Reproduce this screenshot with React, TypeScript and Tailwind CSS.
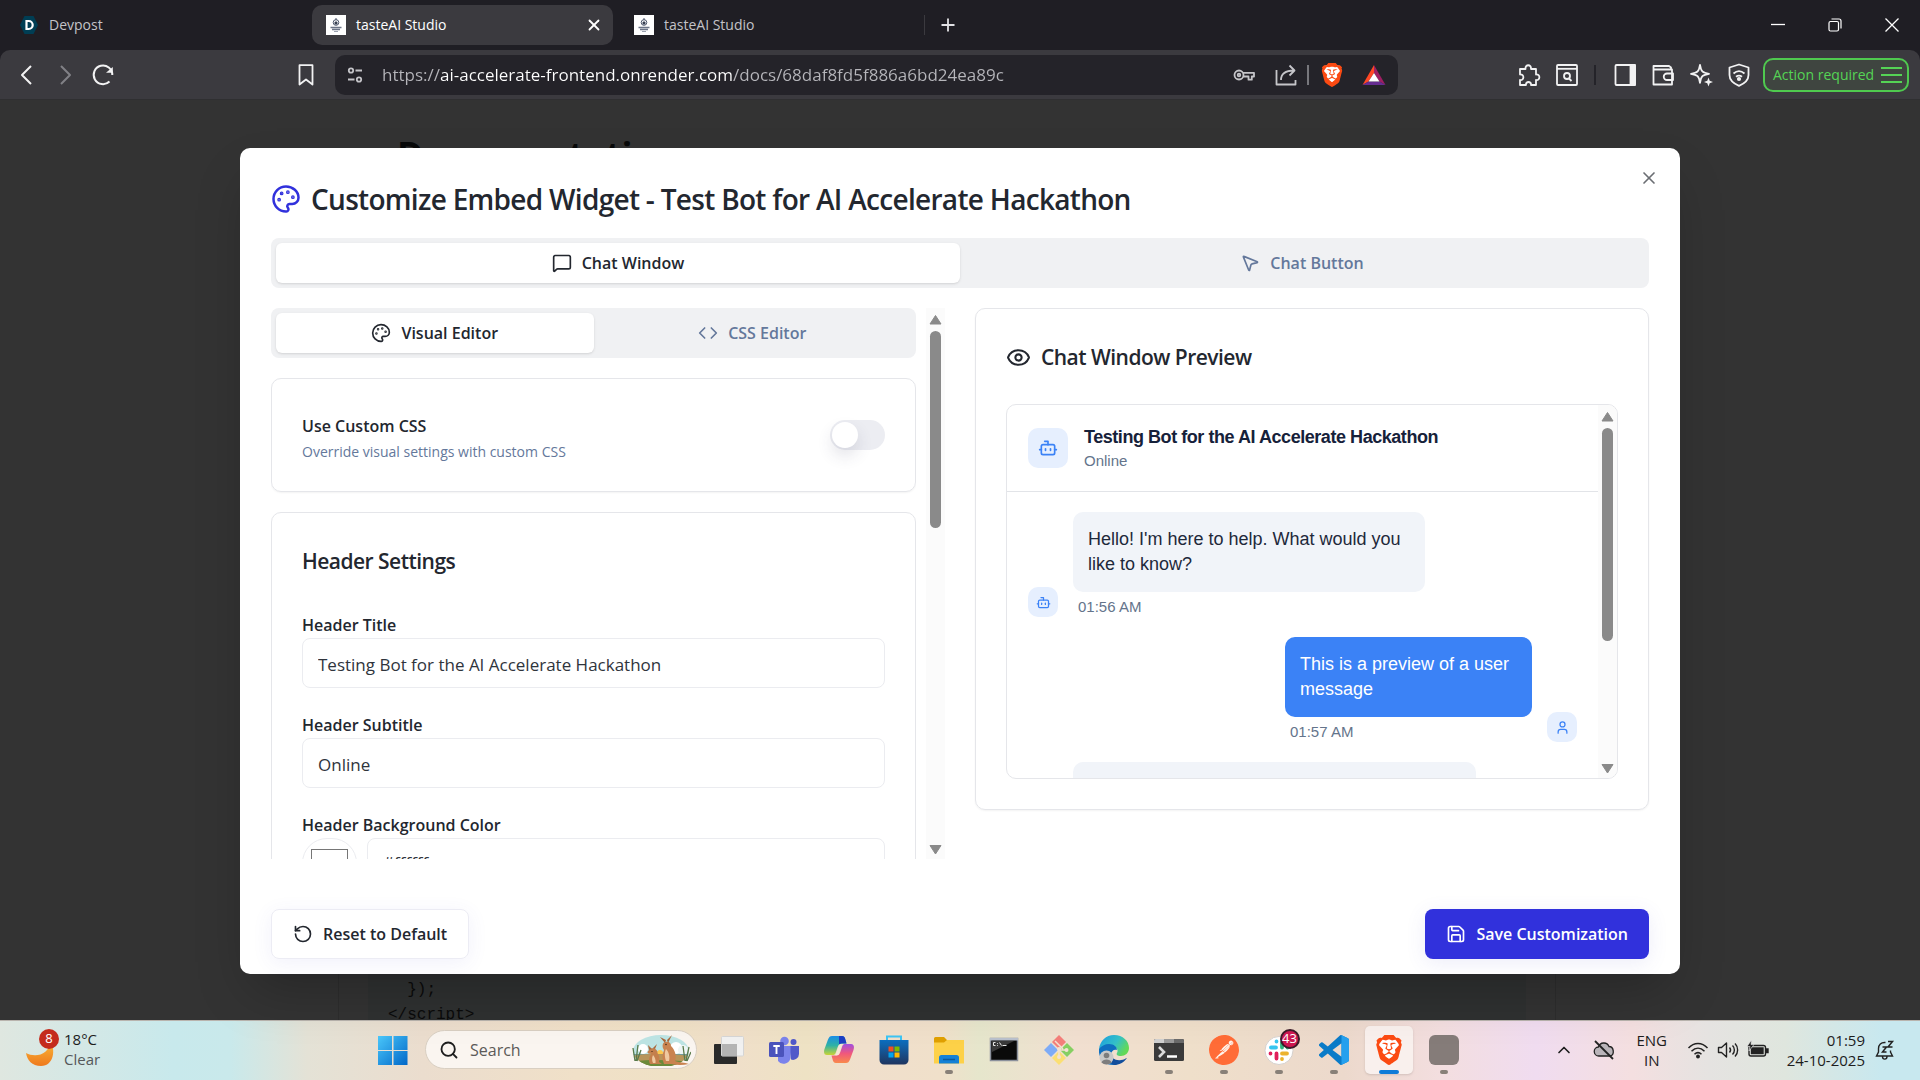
import { useState, type ReactNode } from "react";
import {
  Bot,
  ChevronUp,
  Code,
  Eye,
  MessageSquare,
  MousePointer2,
  Palette,
  RotateCcw,
  Save,
  Search,
  User,
  X,
} from "lucide-react";
import { SiBrave, SiPostman } from "react-icons/si";

const BRAVE_SHIELD = "M12 1 L20 3 L21.5 7 L19 17 L12 23 L5 17 L2.5 7 L4 3 Z";

function BraveLogo({ className }: { className: string }) {
  return (
    <span className={`relative block ${className}`}>
      <svg viewBox="0 0 24 24" className="absolute inset-0 size-full">
        <path d={BRAVE_SHIELD} fill="#fff" />
      </svg>
      <SiBrave className="absolute inset-0 size-full text-[#fb4a12]" />
    </span>
  );
}

function SiteIcon() {
  return (
    <svg viewBox="0 0 20 20" className="size-5 shrink-0">
      <rect width="20" height="20" fill="#fff" />
      <circle cx="10" cy="7.5" r="2.8" fill="none" stroke="#4b556b" />
      <path d="M10 3v2M9 7h2v2H9z" stroke="#4b556b" />
      <path d="M4.5 12.500h11M6 14.500h8" stroke="#6b7487" strokeWidth="1.400" />
      <path d="M8 16.500h4" stroke="#9aa1af" />
    </svg>
  );
}

function BrowserTabs() {
  return (
    <div className="flex h-[50px] shrink-0 items-center bg-[#1f1e24] text-sm text-[#c3c3c8]">
      <button type="button" className="ml-[19px] flex w-[293px] items-center gap-2.5">
        <svg viewBox="0 0 20 20" className="size-5">
          <path d="M5.500 1h9L19 10l-4.500 9h-9L1 10z" fill="#003e54" />
          <path
            d="M7.500 6h2.200a4 4 0 0 1 0 8H7.500z"
            fill="none"
            stroke="#fff"
            strokeWidth="2.200"
          />
        </svg>
        Devpost
      </button>
      <div className="flex h-10 w-[301px] items-center rounded-[10px] bg-[#3b3a3f] pr-2.5 pl-3.5 text-white">
        <button type="button" className="flex flex-1 items-center gap-2.5">
          <SiteIcon />
          tasteAI Studio
        </button>
        <button type="button" aria-label="Close tab">
          <X className="size-[18px]" strokeWidth={2.4} />
        </button>
      </div>
      <button type="button" className="ml-[21px] flex w-[290px] items-center gap-2.5">
        <SiteIcon />
        tasteAI Studio
      </button>
      <div className="h-5 w-px bg-[#3b3a3f]" />
      <button type="button" aria-label="New tab" className="ml-[15px]">
        <svg viewBox="0 0 16 16" className="size-4" stroke="#e2e2e5" strokeWidth="1.800">
          <path d="M8 1.500v13M1.500 8h13" />
        </svg>
      </button>
      <div className="ml-auto flex">
        <button type="button" aria-label="Minimize" className="flex w-[57px] justify-center">
          <svg viewBox="0 0 14 14" className="size-3.5" stroke="#fff" strokeWidth="1.300">
            <path d="M0 6.500h14" />
          </svg>
        </button>
        <button type="button" aria-label="Restore" className="flex w-[57px] justify-center">
          <svg viewBox="0 0 14 14" className="size-3.5" stroke="#fff" strokeWidth="1.200" fill="none">
            <rect x="1" y="3.500" width="9.500" height="9.500" rx="1.500" />
            <path d="M3.500 1H11a2 2 0 0 1 2 2v7.500" />
          </svg>
        </button>
        <button type="button" aria-label="Close window" className="flex w-[57px] justify-center">
          <svg viewBox="0 0 14 14" className="size-3.5" stroke="#fff" strokeWidth="1.300">
            <path d="M.5.5l13 13M13.500.5l-13 13" />
          </svg>
        </button>
      </div>
    </div>
  );
}

function ToolIcon({
  label,
  children,
  className = "w-[38px]",
}: {
  label: string;
  children: ReactNode;
  className?: string;
}) {
  return (
    <button type="button" aria-label={label} className={`flex shrink-0 justify-center ${className}`}>
      <svg
        viewBox="0 0 24 24"
        className="size-6"
        fill="none"
        stroke="currentColor"
        strokeWidth="1.800"
        strokeLinejoin="round"
      >
        {children}
      </svg>
    </button>
  );
}

function Toolbar() {
  return (
    <div className="flex h-[50px] shrink-0 items-center rounded-t-[10px] border-b border-[#2f2f31] bg-[#3b3a3f] text-[#f2f2f3]">
      <div className="flex w-[335px] shrink-0 items-center pl-2">
        <ToolIcon label="Back">
          <path d="M16 3l-9 9 9 9" strokeWidth="2" />
        </ToolIcon>
        <ToolIcon label="Forward">
          <path d="M8 3l9 9-9 9" stroke="#818186" strokeWidth="2" />
        </ToolIcon>
        <ToolIcon label="Reload">
          <path d="M18.500 18.500a9.300 9.300 0 1 1 2.800-6.500" strokeWidth="2" />
          <path d="M15 9.800h6.800V4z" fill="currentColor" stroke="none" />
        </ToolIcon>
        <ToolIcon label="Bookmark" className="ml-auto w-[58px]">
          <path d="M5.500 2.200h13v19.300L12 16.500l-6.500 5z" />
        </ToolIcon>
      </div>
      <div className="flex h-10 min-w-0 flex-1 items-center rounded-[10px] bg-[#242329]">
        <ToolIcon label="Site information" className="w-10 text-[#c5c5c9]">
          <circle cx="8" cy="7.500" r="2.200" />
          <path d="M12.500 7.500H19M5 16.500h6.500" />
          <circle cx="16" cy="16.500" r="2.200" />
        </ToolIcon>
        {/* scheme and path are dimmer than the host name */}
        <input
          type="text"
          aria-label="Address"
          defaultValue="https://ai-accelerate-frontend.onrender.com/docs/68daf8fd5f886a6bd24ea89c"
          className="ml-[7px] h-10 min-w-0 flex-1 bg-[linear-gradient(90deg,#b6b6bb_58px,#fff_58px,#fff_351px,#b6b6bb_351px)] bg-clip-text text-[17px] text-transparent outline-none"
        />
        <ToolIcon label="Passwords" className="w-[42px] text-[#c5c5c9]">
          <circle cx="7" cy="12" r="4.500" />
          <circle cx="7" cy="12" r="1.300" />
          <path d="M11 9.800h11v3.700h-2.200v3.200h-3.300v-3.200H11.300" />
        </ToolIcon>
        <ToolIcon label="Share" className="w-[42px] text-[#c5c5c9]">
          <path d="M2.500 7v14.500h19V17" />
          <path d="M7 17c0-6 4-9.500 13-9.500M15.500 2.500l5 5-5 5" />
        </ToolIcon>
        <div className="h-5 w-0.5 bg-[#77777c]" />
        <button type="button" aria-label="Brave Shields" className="flex w-[46px] justify-center">
          <BraveLogo className="size-6" />
        </button>
        <button type="button" aria-label="Brave Rewards" className="mr-3 ml-[7px]">
          <svg viewBox="0 0 24 22" className="h-[22px] w-6">
            <path d="M12 1L12 9 6.500 17.500.5 21z" fill="#ff4724" />
            <path d="M12 1L23.500 21l-6-3.500L12 9z" fill="#9e1f63" />
            <path d="M.5 21l6-3.500h11l6 3.500z" fill="#662d91" />
            <path d="M12 9l5.500 8.500h-11z" fill="#fff" />
          </svg>
        </button>
      </div>
      <div className="flex shrink-0 items-center pr-[11px] pl-28">
        <ToolIcon label="Extensions">
          <path d="M3 6h5.500C8 1 14.500 1 14 6h5v5.500c4.500-.5 4.500 6 0 5.500v5h-5c.5-4-5.500-4-5 0H3v-5c4.500.5 4.500-6 0-5.500z" />
        </ToolIcon>
        <ToolIcon label="Search tabs">
          <rect x="2" y="2" width="20" height="20" rx="1" />
          <path d="M2 5.800h20" />
          <circle cx="12" cy="13" r="3" />
          <path d="M14 15.500l2.500 2.500" />
        </ToolIcon>
        <div className="mr-2.5 ml-2 h-5 w-0.5 bg-[#242329]" />
        <ToolIcon label="Sidebar">
          <rect x="2.500" y="2" width="19.500" height="20" rx="1" />
          <path d="M17.500 2H22v20h-4.500z" fill="currentColor" />
        </ToolIcon>
        <ToolIcon label="Wallet">
          <path d="M20 6.500V4.500L18 3H2.500v18.500H21V6.500H2.500M22 10.500h-6a3 3 0 0 0 0 6.500h6z" />
        </ToolIcon>
        <ToolIcon label="Leo">
          <path d="M11 1.800c1 6.500 2.500 8 9 9-6.500 1-8 2.500-9 9-1-6.500-2.500-8-9-9 6.500-1 8-2.500 9-9z" />
          <path d="M19.500 14.500l1.200 3.200 3.300 1.300-3.300 1.200-1.200 3.300-1.200-3.300-3.300-1.200 3.300-1.300z" fill="currentColor" stroke="none" />
        </ToolIcon>
        <ToolIcon label="VPN">
          <path d="M12 1.500l9.500 3V12c0 5-4 8.500-9.500 10.800C6.500 20.500 2.500 17 2.500 12V4.500z" />
          <path d="M6.500 10.500c3.500-3 7.500-3 11 0M9 13.700c2-1.500 4-1.500 6 0" />
          <circle cx="12" cy="16" r="1.200" fill="currentColor" />
        </ToolIcon>
        <button
          type="button"
          className="ml-[5px] flex h-[34px] w-[146px] items-center justify-between rounded-[10px] border-2 border-[#4fc94f] bg-[#3f4540] pr-[5px] pl-2 text-sm whitespace-nowrap text-[#55d455]"
        >
          Action required
          <svg viewBox="0 0 21 18" className="h-[18px] w-[21px]" stroke="currentColor" strokeWidth="2">
            <path d="M0 2h21M0 9h21M0 16h21" />
          </svg>
        </button>
      </div>
    </div>
  );
}

function DocsPage() {
  return (
    <div className="flex h-full flex-col justify-between overflow-hidden bg-[#333]">
      <h1 className="pt-[30px] pl-[397px] text-[36px] leading-[50px] font-bold text-[#080909]">
        Documentation
      </h1>
      <div className="mr-[364px] -mb-2 ml-[338px] h-40 border-x border-[#2d2d2d] pr-[29px] pl-[29px]">
        <pre className="flex h-full flex-col justify-end bg-[#2f3131] pl-5 font-['Liberation_Mono',monospace] text-base leading-[25px] text-[#0a0a0a]">
          {"  });\n</script>"}
        </pre>
      </div>
    </div>
  );
}

function Scrollbar({ thumb }: { thumb: string }) {
  return (
    <div className="flex w-[19px] shrink-0 flex-col items-center bg-[#fbfbfb]">
      <svg viewBox="0 0 19 23" className="h-[23px] w-[19px] shrink-0">
        <path d="M9.500 7.500L15 16H4z" fill="#8a8a8a" stroke="#8a8a8a" strokeLinejoin="round" />
      </svg>
      <div className="min-h-0 w-full flex-1">
        <div className={`mx-auto w-[11px] rounded-full bg-[#8a8a8a] ${thumb}`} />
      </div>
      <svg viewBox="0 0 19 23" className="h-[23px] w-[19px] shrink-0">
        <path d="M9.500 18L15 9.500H4z" fill="#8a8a8a" stroke="#8a8a8a" strokeLinejoin="round" />
      </svg>
    </div>
  );
}

function TabButton({
  active,
  onClick,
  children,
}: {
  active: boolean;
  onClick: () => void;
  children: ReactNode;
}) {
  return (
    <button
      type="button"
      role="tab"
      aria-selected={active}
      onClick={onClick}
      className={`flex h-10 flex-1 items-center justify-center gap-2.5 rounded-[6px] text-base font-semibold ${
        active ? "bg-white text-[#23272f] shadow-sm" : "text-[#64789b]"
      }`}
    >
      {children}
    </button>
  );
}

function Field({ id, label, defaultValue }: { id: string; label: string; defaultValue: string }) {
  return (
    <div>
      <label htmlFor={id} className="block text-base leading-[25px] font-semibold">
        {label}
      </label>
      <input
        id={id}
        type="text"
        defaultValue={defaultValue}
        className="h-[50px] w-full rounded-[8px] border border-[#ebecf0] px-[15px] pt-0.5 text-[#2f343c]"
      />
    </div>
  );
}

function EditorPanel() {
  const [mode, setMode] = useState("visual");
  const [customCss, setCustomCss] = useState(false);
  const [color, setColor] = useState("#ffffff");

  return (
    <div className="flex min-h-0 gap-2.5">
      <div className="flex min-w-0 flex-1 flex-col gap-5 overflow-hidden">
        <div role="tablist" className="flex shrink-0 rounded-[8px] bg-[#f0f1f3] p-[5px]">
          <TabButton active={mode === "visual"} onClick={() => setMode("visual")}>
            <Palette className="size-5" />
            Visual Editor
          </TabButton>
          <TabButton active={mode === "css"} onClick={() => setMode("css")}>
            <Code className="size-5" />
            CSS Editor
          </TabButton>
        </div>

        <section className="flex h-[114px] shrink-0 items-center justify-between rounded-[10px] border border-[#e5e6ea] px-[30px] shadow-xs">
          <div className="pt-2">
            <label htmlFor="custom-css" className="block text-base leading-[26px] font-semibold">
              Use Custom CSS
            </label>
            <p className="text-sm leading-[26px] text-[#64789b]">
              Override visual settings with custom CSS
            </p>
          </div>
          <label className="relative block h-[30px] w-[55px]">
            <input
              id="custom-css"
              type="checkbox"
              role="switch"
              checked={customCss}
              onChange={(e) => setCustomCss(e.target.checked)}
              className="peer block h-[30px] w-[55px] appearance-none rounded-full bg-[#ecedf2] checked:bg-[#3131dc]"
            />
            <span className="pointer-events-none absolute top-[2px] left-[2px] size-[26px] rounded-full bg-white shadow-[0_8px_16px_rgba(60,60,90,0.14)] peer-checked:left-[27px]" />
          </label>
        </section>

        <section className="shrink-0 rounded-[10px] border border-[#e5e6ea] p-[30px] shadow-xs">
          <h3 className="pt-[3px] text-[21px] leading-[30px] font-semibold tracking-tight">
            Header Settings
          </h3>
          <div className="flex flex-col gap-[25px] pt-[37px]">
            <Field
              id="header-title"
              label="Header Title"
              defaultValue="Testing Bot for the AI Accelerate Hackathon"
            />
            <Field id="header-subtitle" label="Header Subtitle" defaultValue="Online" />
            <div>
              <label htmlFor="header-bg" className="block text-base leading-[25px] font-semibold">
                Header Background Color
              </label>
              <div className="flex gap-2.5">
                <div className="rounded-full border border-[#ebecf0] px-2 py-2.5">
                  <input
                    type="color"
                    aria-label="Pick header background color"
                    value={color}
                    onChange={(e) => setColor(e.target.value)}
                    className="block h-7 w-[37px] appearance-none border border-[#767676] bg-white [&::-webkit-color-swatch]:border-0 [&::-webkit-color-swatch-wrapper]:p-0"
                  />
                </div>
                <input
                  id="header-bg"
                  type="text"
                  value={color}
                  onChange={(e) => setColor(e.target.value)}
                  className="h-[50px] min-w-0 flex-1 rounded-[8px] border border-[#ebecf0] px-[15px] pb-0.5 text-[#2f343c]"
                />
              </div>
            </div>
          </div>
        </section>
      </div>
      <Scrollbar thumb="h-[39%]" />
    </div>
  );
}

function ChatPreview() {
  return (
    <section className="self-start rounded-[10px] border border-[#e5e6ea] p-[30px] shadow-xs">
      <h3 className="flex items-center gap-2.5 pt-[3px] text-[21px] leading-[30px] font-semibold tracking-tight">
        <Eye className="size-[25px]" />
        Chat Window Preview
      </h3>
      <div className="mt-8 flex h-[375px] overflow-hidden rounded-[10px] border border-[#e5e6ea] font-['Liberation_Sans',Arial,sans-serif] text-[#1e293b]">
        <div className="min-w-0 flex-1 overflow-hidden">
          <header className="flex items-center gap-4 border-b border-[#e2e4e8] px-[21px] py-[19px]">
            <span className="flex size-10 items-center justify-center rounded-[10px] bg-[#e6effe] text-[#3b82f6]">
              <Bot className="size-5" />
            </span>
            <div>
              <h4 className="text-lg leading-[26px] font-bold tracking-tight text-[#16213a]">
                Testing Bot for the AI Accelerate Hackathon
              </h4>
              <p className="text-[15px] leading-[22px] text-[#64748b]">Online</p>
            </div>
          </header>
          <div className="flex flex-col gap-5 px-[21px] py-5">
            <div className="flex items-end gap-[15px]">
              <span className="flex size-[30px] items-center justify-center rounded-[10px] bg-[#e6effe] text-[#3b82f6]">
                <Bot className="size-[15px]" />
              </span>
              <div className="max-w-[352px]">
                <p className="rounded-[10px] bg-[#f1f4f9] p-[15px] text-lg leading-[25px]">
                  Hello! I'm here to help. What would you like to know?
                </p>
                <p className="px-[5px] pt-[5px] text-[15px] leading-5 text-[#64748b]">01:56 AM</p>
              </div>
            </div>
            <div className="flex items-end justify-end gap-[15px]">
              <div className="max-w-[247px]">
                <p className="rounded-[10px] bg-[#3b82f6] p-[15px] text-lg leading-[25px] text-white">
                  This is a preview of a user message
                </p>
                <p className="px-[5px] pt-[5px] text-[15px] leading-5 text-[#64748b]">01:57 AM</p>
              </div>
              <span className="flex size-[30px] items-center justify-center rounded-[10px] bg-[#e6effe] text-[#3b82f6]">
                <User className="size-[15px]" />
              </span>
            </div>
            <div className="ml-[45px] h-20 max-w-[403px] rounded-[10px] bg-[#f1f4f9]" />
          </div>
        </div>
        <Scrollbar thumb="h-[65%]" />
      </div>
    </section>
  );
}

function CustomizeDialog() {
  const [tab, setTab] = useState("window");

  return (
    <div
      role="dialog"
      aria-labelledby="dialog-title"
      className="relative flex h-full w-3/4 flex-col rounded-[10px] bg-white px-[31px] pt-[31px] pb-[15px] text-[17px] text-[#23272f] shadow-2xl"
    >
      <button type="button" aria-label="Close" className="absolute top-5 right-[21px] text-[#6b6e73]">
        <X className="size-5" />
      </button>
      <h2
        id="dialog-title"
        className="flex items-center gap-2.5 text-[28px] leading-10 font-semibold tracking-tight"
      >
        <Palette className="size-[30px] text-[#3131dc]" />
        Customize Embed Widget - Test Bot for AI Accelerate Hackathon
      </h2>
      <div role="tablist" className="mt-[19px] flex shrink-0 rounded-[8px] bg-[#f0f1f3] p-[5px]">
        <TabButton active={tab === "window"} onClick={() => setTab("window")}>
          <MessageSquare className="size-5" />
          Chat Window
        </TabButton>
        <TabButton active={tab === "button"} onClick={() => setTab("button")}>
          <MousePointer2 className="size-5" />
          Chat Button
        </TabButton>
      </div>
      <div className="mt-5 grid min-h-0 flex-1 grid-cols-2 gap-[30px]">
        <EditorPanel />
        <ChatPreview />
      </div>
      <footer className="mt-[50px] flex justify-between text-base font-semibold">
        <button
          type="button"
          className="flex h-[50px] items-center gap-2.5 rounded-[8px] border border-[#ececf4] px-[21px] shadow-[0_4px_20px_rgba(80,80,200,0.08)]"
        >
          <RotateCcw className="size-5" />
          Reset to Default
        </button>
        <button
          type="button"
          className="flex h-[50px] items-center gap-2.5 rounded-[8px] bg-[#3131dc] px-[21px] text-white shadow-[0_4px_20px_rgba(80,80,200,0.1)]"
        >
          <Save className="size-5" />
          Save Customization
        </button>
      </footer>
    </div>
  );
}

function TaskApp({
  label,
  open,
  active,
  children,
}: {
  label: string;
  open?: boolean;
  active?: boolean;
  children: ReactNode;
}) {
  return (
    <button type="button" aria-label={label} className="flex w-[55px] shrink-0 justify-center">
      <span
        className={`flex size-12 flex-col items-center rounded-[5px] pt-[9px] ${
          active ? "bg-[#f9f0ed] shadow-sm" : ""
        }`}
      >
        {children}
        {open && (
          <span className={`mt-[5px] h-1 shrink-0 rounded-full ${active ? "w-5 bg-[#0f7bd8]" : "w-2 bg-[#888078]"}`} />
        )}
      </span>
    </button>
  );
}

function Kangaroos() {
  return (
    <svg viewBox="0 0 60 32" className="h-8 w-[60px]">
      <defs>
        <clipPath id="scene">
          <ellipse cx="30" cy="17" rx="28" ry="16" />
        </clipPath>
      </defs>
      <g clipPath="url(#scene)">
        <rect width="60" height="32" fill="#bde4e4" />
        <circle cx="12" cy="15" r="5" fill="#fff" />
        <circle cx="45" cy="14" r="6" fill="#fff" />
        <circle cx="52" cy="16" r="5" fill="#eef6f5" />
        <circle cx="29" cy="19" r="3" fill="#ffc94d" />
        <path d="M0 20h60v4H0z" fill="#6f9a9c" />
        <path d="M0 22c20-3 40-2 60 0v10H0z" fill="#b8955a" />
        <path d="M0 28c20-3 40-2 60 0v4H0z" fill="#6a8a3a" />
      </g>
      <path d="M4 27L2 14M5 27l2-16M6 27l4-11M55 27l3-14M54 27l-2-15M56 27l4-9" stroke="#587a4a" strokeWidth="1.300" />
      <path d="M23 14c2 1 4 3 3.500 5 2 3 2.500 6 1.500 9l3 2h-12c-2-4-.5-8 1.500-10-3 0-4-1-4-2 1-2 4-4 6.500-4z" fill="#c47f4c" />
      <path d="M21 15l-4-4 1 5zM24 15l2-5-4 4z" fill="#a9673b" />
      <path d="M34 8c4-1 6 1 6 4 4 4 6 10 4 15 5 2 9 1 14 3-7 1.500-13 1-18 0h-7c-2-5-2-9 0-14-2-3-2-7 1-8z" fill="#c98350" />
      <path d="M34 9l-5-6 6 3zM37 9l4-8-5 5z" fill="#a9673b" />
      <path d="M35 15c-2 4-1 9 0 12h3c1-4 0-9-3-12zM22 21c-1.500 3-1 6 0 8h2.500c.5-3-.5-6-2.500-8z" fill="#efc9a0" />
      <circle cx="35" cy="10.500" r=".7" fill="#2c1b10" />
      <circle cx="21" cy="17.500" r=".6" fill="#2c1b10" />
    </svg>
  );
}

function Taskbar() {
  return (
    <footer className="flex h-[60px] shrink-0 items-center border-t border-[#b9b4ae] bg-[linear-gradient(90deg,#dfe7e0_0%,#c8e9ec_9%,#c9e9eb_12%,#e4e2d6_16%,#ebddce_22%,#f0e0c8_30%,#efe1c5_35%,#f0dfca_38%,#eee2c4_42%,#f0dfcc_45%,#f0e0ca_49%,#e6e6cc_51%,#f1dfd0_56%,#efdfca_62%,#ecd9cc_70%,#f3dedf_75%,#f0dcf0_80%,#f4dfe0_85%,#e5e3e1_89%,#dfe6de_93%,#c8e8ef_98%)] pb-0.5 text-[15px] text-[#1d1d1d]">
      <div className="flex w-[365px] shrink-0 items-center">
        <div className="relative ml-[26px] h-9 w-[38px]">
          <svg viewBox="0 0 38 36" className="size-full">
            <defs>
              <linearGradient id="moon" x1="0" y1="0" x2="0" y2="1">
                <stop offset="0" stopColor="#f9b93a" />
                <stop offset="1" stopColor="#ef7a1d" />
              </linearGradient>
            </defs>
            <path d="M24 9c6 8 4 25-9 25C6 34 1 28 0 21c9 5 24 2 24-12z" fill="url(#moon)" />
          </svg>
          <span className="absolute -top-[3px] left-[13px] flex size-5 items-center justify-center rounded-full bg-[#c42b1c] text-[13px] text-white">
            8
          </span>
        </div>
        <div className="pb-0.5 leading-5">
          <p>18°C</p>
          <p className="text-[#55585a]">Clear</p>
        </div>
      </div>
      <TaskApp label="Start">
        <svg viewBox="0 0 30 30" className="size-[30px]">
          <defs>
            <linearGradient id="win" x1="0" y1="0" x2="1" y2="1">
              <stop offset="0" stopColor="#4bc8fb" />
              <stop offset="1" stopColor="#0067c8" />
            </linearGradient>
          </defs>
          <path d="M0 1h14v14H0zM15.500 1h14v14h-14zM0 16h14v14H0zM15.500 16h14v14h-14z" fill="url(#win)" />
        </svg>
      </TaskApp>
      <div className="mr-1 ml-[5px] flex h-[39px] w-[272px] shrink-0 items-center rounded-full border border-[#d9cfc2] bg-[#faf5f0] pr-[5px] pl-[13px]">
        <Search className="size-5 shrink-0 text-[#1d1d1d]" strokeWidth={2.2} />
        <input
          type="text"
          aria-label="Search"
          placeholder="Search"
          className="ml-[11px] w-0 min-w-0 flex-1 text-base placeholder:text-[#5c5a58]"
        />
        <Kangaroos />
      </div>
      <TaskApp label="Task view">
        <svg viewBox="0 0 30 30" className="size-[30px]">
          <rect x="0" y="9" width="23" height="20" rx="1" fill="#2a2a2a" />
          <rect x="7.500" y="1.500" width="22" height="19.500" rx="1" fill="#f1f1f1" stroke="#d5d5d5" />
          <path d="M8 9h15v12H8z" fill="#b4b4b4" />
        </svg>
      </TaskApp>
      <TaskApp label="Teams">
        <svg viewBox="0 0 30 30" className="size-[30px]">
          <circle cx="24.500" cy="7" r="3" fill="#5059c9" />
          <circle cx="15.500" cy="6" r="4.300" fill="#7b83eb" />
          <path d="M20 11h10v8a6 6 0 0 1-8 5.500z" fill="#5059c9" />
          <path d="M9 11h12.500v10a7 7 0 0 1-12.500 5z" fill="#7b83eb" />
          <rect x="0" y="7" width="15" height="15" rx="1.500" fill="#4b53bc" />
          <path d="M4.300 11h6.500M7.500 11v8" stroke="#fff" strokeWidth="1.900" />
        </svg>
      </TaskApp>
      <TaskApp label="Copilot">
        <svg viewBox="0 0 30 30" className="size-[30px]">
          <defs>
            <linearGradient id="cop1" x1="0" y1="0" x2="0" y2="1">
              <stop offset="0" stopColor="#1b8fe8" />
              <stop offset=".5" stopColor="#2fb2a5" />
              <stop offset="1" stopColor="#c9d434" />
            </linearGradient>
            <linearGradient id="cop2" x1="0" y1="0" x2="0" y2="1">
              <stop offset="0" stopColor="#a14ee0" />
              <stop offset=".5" stopColor="#f0587c" />
              <stop offset="1" stopColor="#f98a4b" />
            </linearGradient>
          </defs>
          <path d="M8 1h10c2 0 3 1.500 3.500 4l1 3.500h-4c-3 0-4 1-5 4L12 17c-.8 2.500-1.500 3-4 3H3c-3 0-3.500-3-2.500-6L4 4.500C5 2 6 1 8 1z" fill="url(#cop1)" />
          <path d="M15 1h3c2 0 3 1.500 3.500 4l1 3.500h-4c-1.500 0-2.600.2-3.500 1z" fill="#1c3fc4" />
          <path d="M22 28H12c-2 0-3-1.500-3.500-4l-1-3.500h4c3 0 4-1 5-4L18 12c.8-2.500 1.500-3 4-3h5c3 0 3.500 3 2.500 6L26 24.500C25 27 24 28 22 28z" fill="url(#cop2)" />
          <path d="M15.500 9.500L18 9l-3.500 11-3 .5z" fill="#f5e6d6" />
        </svg>
      </TaskApp>
      <TaskApp label="Microsoft Store">
        <svg viewBox="0 0 30 30" className="size-[30px]">
          <defs>
            <linearGradient id="store" x1="0" y1="0" x2="0" y2="1">
              <stop offset="0" stopColor="#0c6fc0" />
              <stop offset="1" stopColor="#1f355f" />
            </linearGradient>
          </defs>
          <path d="M8 6V1.500h14V6" fill="none" stroke="#3cc4f4" strokeWidth="2" />
          <path d="M.5 5h29v20a4.500 4.500 0 0 1-4.500 4.500H5A4.500 4.500 0 0 1 .5 25z" fill="url(#store)" />
          <path d="M9.500 11.500h5v5h-5z" fill="#f25022" />
          <path d="M15.500 11.500h5v5h-5z" fill="#7fba00" />
          <path d="M9.500 17.500h5v5h-5z" fill="#00a4ef" />
          <path d="M15.500 17.500h5v5h-5z" fill="#ffb900" />
        </svg>
      </TaskApp>
      <TaskApp label="File Explorer" open>
        <svg viewBox="0 0 30 30" className="size-[30px]">
          <path d="M0 3.500A1.500 1.500 0 0 1 1.500 2H10l3 3h15.500A1.500 1.500 0 0 1 30 6.500V10H0z" fill="#e0a000" />
          <path d="M0 7.500h10L13 5h17v23.500H0z" fill="#fdd148" />
          <path d="M5 28.500v-6A2.500 2.500 0 0 1 7.500 20h15a2.500 2.500 0 0 1 2.500 2.500v6z" fill="#1581d6" />
          <path d="M9 24.500h12" stroke="#0b5a9e" strokeWidth="1.500" />
        </svg>
      </TaskApp>
      <TaskApp label="Command Prompt">
        <svg viewBox="0 0 30 30" className="size-[30px]">
          <rect x="1.500" y="3.500" width="27" height="22" fill="#0a0a0a" stroke="#8b919c" strokeWidth="1.500" />
          <path d="M1 3h28v2.500H1z" fill="#b9c0cc" />
          <path d="M3 6h22L3 17z" fill="#3a3a3a" />
          <path d="M6.500 7.500h-2v3h2M8.500 8v.8M8.500 10v.8M10.500 7.500l2 3M13.500 10.500h4" stroke="#e8e8e8" fill="none" />
        </svg>
      </TaskApp>
      <TaskApp label="Git Bash">
        <svg viewBox="0 0 30 30" className="size-[30px]">
          <path d="M15 0l7 7-7 7-7-7z" fill="#f47f7b" />
          <path d="M23 8l7 7-7 7-7-7z" fill="#86cf62" />
          <path d="M7 8l7 7-7 7-7-7z" fill="#7eabf6" />
          <path d="M15 16l7 7-7 7-7-7z" fill="#fbdf74" />
          <path d="M11 6l8 8M15 15v8M15 15h8" stroke="#f3e2d2" strokeWidth="1.500" />
          <circle cx="15" cy="14" r="2" fill="#f3e2d2" />
          <circle cx="22.500" cy="15" r="2" fill="#f3e2d2" />
          <circle cx="15" cy="22" r="2" fill="#f3e2d2" />
        </svg>
      </TaskApp>
      <TaskApp label="Edge">
        <svg viewBox="0 0 30 30" className="size-[30px]">
          <defs>
            <linearGradient id="edge" x1="0" y1="0" x2="1" y2=".5">
              <stop offset="0" stopColor="#1b9de2" />
              <stop offset=".6" stopColor="#35c1c8" />
              <stop offset="1" stopColor="#62d957" />
            </linearGradient>
          </defs>
          <path d="M0 14C1 6 7 0 15 0c9 0 15 6 15 13 0 5-4 8-8 8-4 0-5-1.500-4-3 2-3-1-7-6-7-5 0-9 2-12 3z" fill="url(#edge)" />
          <path d="M0 14c2-3 6-5 10-5 5 0 8 3 8 6-3-1-6 1-6 5 0 5 5 8 10 7-3 2-5 3-8 3C6 30-1 23 0 14z" fill="#0f6fc0" />
          <path d="M12 18c-1 5 5 8 10 7 3 0 4-1.500 6-2-3 4.500-8 7-13 7-5-2-8-9-3-12z" fill="#124e9c" />
          <circle cx="7.500" cy="22.500" r="7" fill="#c9c9c9" />
          <circle cx="7.500" cy="20.500" r="2.800" fill="#7d7d7d" />
          <path d="M2.500 27.500c1-4 9-4 10 0a7 7 0 0 1-10 0z" fill="#7d7d7d" />
        </svg>
      </TaskApp>
      <TaskApp label="Terminal" open>
        <svg viewBox="0 0 30 30" className="size-[30px]">
          <rect x="0" y="4" width="30" height="22" rx="1.500" fill="#3a3a3a" />
          <path d="M0 8V5.500A1.500 1.500 0 0 1 1.500 4H10v4z" fill="#d0d0d0" />
          <path d="M10 4h10v4H10z" fill="#9a9a9a" />
          <path d="M20 4h8.500A1.500 1.500 0 0 1 30 5.500V8H20z" fill="#6a6a6a" />
          <path d="M5 12l5 5-5 5" fill="none" stroke="#dcdcdc" strokeWidth="2.600" />
          <path d="M13 21.500h10" stroke="#fff" strokeWidth="2.500" />
        </svg>
      </TaskApp>
      <TaskApp label="Postman" open>
        <span className="rounded-full bg-[#fff5ee]">
          <SiPostman className="size-[30px] text-[#ff6c37]" />
        </span>
      </TaskApp>
      <TaskApp label="Slack" open>
        <span className="relative">
          <svg viewBox="0 0 30 30" className="size-[30px]">
            <circle cx="15" cy="15.500" r="14" fill="#fff" stroke="#d5d0cc" />
            <g strokeWidth="3.800" strokeLinecap="round">
              <path d="M7 12.500h5M12.500 6.500v.01" stroke="#36c5f0" />
              <path d="M18 7.500v5M23.500 12.500v.01" stroke="#2eb67d" />
              <path d="M18 18.500h5M18 24v.01" stroke="#ecb22e" />
              <path d="M12.500 18.500v5M6.500 18.500v.01" stroke="#e01e5a" />
            </g>
          </svg>
          <span className="absolute -top-[6px] left-4 flex size-5 items-center justify-center rounded-full border-2 border-[#3c1a28] bg-[#cd1750] text-[13px] text-white">
            43
          </span>
        </span>
      </TaskApp>
      <TaskApp label="Visual Studio Code" open>
        <svg viewBox="0 0 24 24" className="size-[30px]">
          <path
            d="M23.150 2.587L18.210.21a1.494 1.494 0 0 0-1.705.29l-9.460 8.630-4.120-3.128a.999.999 0 0 0-1.276.057L.327 7.261A1 1 0 0 0 .326 8.740L3.899 12 .326 15.260a1 1 0 0 0 .001 1.479L1.650 17.940a.999.999 0 0 0 1.276.057l4.120-3.128 9.460 8.630a1.492 1.492 0 0 0 1.704.29l4.942-2.377A1.500 1.500 0 0 0 24 20.060V3.939a1.500 1.500 0 0 0-.85-1.352zm-5.146 14.861L10.826 12l7.178-5.448v10.896z"
            fill="#0a7bc8"
          />
          <path d="M18 .200l5.150 2.387A1.500 1.500 0 0 1 24 3.940v16.120a1.500 1.500 0 0 1-.85 1.360L18 23.800z" fill="#25a0ee" />
        </svg>
      </TaskApp>
      <TaskApp label="Brave" open active>
        <BraveLogo className="size-[30px]" />
      </TaskApp>
      <TaskApp label="Running app" open>
        <span className="size-[30px] rounded-[6px] bg-[#857c79]" />
      </TaskApp>
      <div className="ml-auto flex items-center pr-[25px]">
        <button type="button" aria-label="Show hidden icons">
          <ChevronUp className="size-5" />
        </button>
        <svg viewBox="0 0 22 20" className="ml-[19px] h-5 w-[22px]" fill="none" stroke="#222" strokeWidth="1.300">
          <path d="M6 16a4.500 4.500 0 0 1-.5-9C7 2 14 1.500 16 6.500c5 0 6 8.500 1 9.500z" fill="#b9b4b9" />
          <path d="M2 1l18 18" strokeWidth="1.800" />
        </svg>
        <p className="ml-5 w-[34px] text-center leading-5">
          ENG
          <br />
          IN
        </p>
        <svg viewBox="0 0 22 20" className="ml-[18px] h-5 w-[22px]" fill="none" stroke="#222" strokeWidth="1.500">
          <path d="M1.500 8c5.500-6 13.500-6 19 0M4.500 11.200c4-4 9-4 13 0M7.500 14.200c2.200-2 4.800-2 7 0" />
          <circle cx="11" cy="16.500" r="1.200" fill="#222" />
        </svg>
        <svg viewBox="0 0 22 20" className="ml-2 h-5 w-[22px]" fill="none" stroke="#222" strokeWidth="1.400" strokeLinejoin="round">
          <path d="M1.500 7.500h3L9.500 3v14l-5-4.500h-3zM12.500 7.500c1.300 1.500 1.300 3.500 0 5M15.500 5.500c2.500 2.500 2.500 6.500 0 9M18 3.500c3.500 3.500 3.500 9.500 0 13" />
        </svg>
        <svg viewBox="0 0 22 20" className="ml-2 h-5 w-[22px]" fill="none" stroke="#222" strokeWidth="1.400">
          <rect x="2" y="5.500" width="16.500" height="10.500" rx="2" />
          <path d="M4.500 8h11.500v5.500H4.500z" fill="#222" />
          <path d="M19.500 9v3.500h1.500V9z" fill="#222" />
          <path d="M4.500 0L0 6.500h3L2 11l5-6.500H4z" fill="#222" stroke="#eee" strokeWidth=".6" />
        </svg>
        <p className="ml-[18px] text-right leading-5">
          01:59
          <br />
          24-10-2025
        </p>
        <svg viewBox="0 0 20 22" className="ml-2.5 h-[22px] w-5" fill="none" stroke="#222" strokeWidth="1.400">
          <path d="M10.500 3.500C6 3 3.500 6 3.500 9.500V13L1.500 17h16l-2-4v-1.500M7.500 17.500c0 3.500 4.500 3.500 4.500 0" />
          <path d="M7.500 8h4l-4 5h4M13 2.500h4.500L13 8h4.500" strokeWidth="1.500" />
        </svg>
      </div>
    </footer>
  );
}

export default function App() {
  return (
    <div className="flex h-screen flex-col overflow-hidden bg-[#1f1e24] font-['Open_Sans','Noto_Sans',sans-serif]">
      <BrowserTabs />
      <Toolbar />
      <main className="relative min-h-0 flex-1">
        <DocsPage />
        <div className="absolute inset-0 flex justify-center pt-12 pb-[46px]">
          <CustomizeDialog />
        </div>
      </main>
      <Taskbar />
    </div>
  );
}
